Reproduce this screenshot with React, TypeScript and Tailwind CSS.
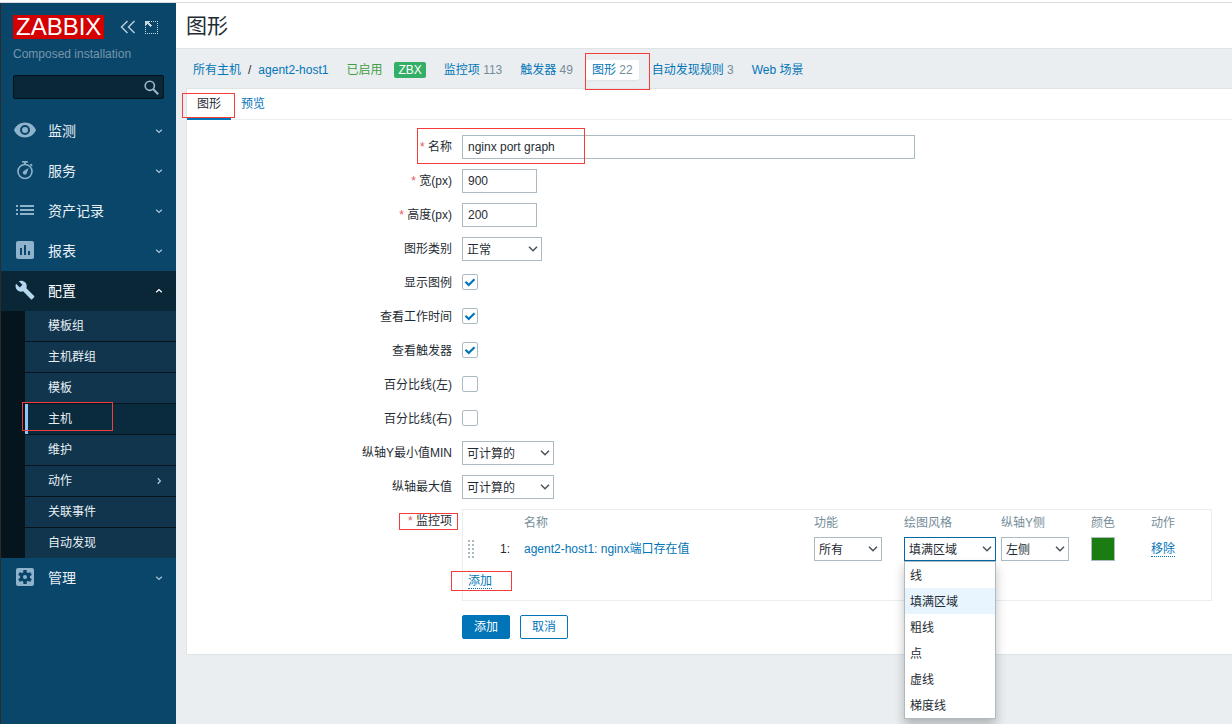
import { useState, type ReactNode } from "react";

const iconProps = { width: 24, height: 24, viewBox: "0 0 24 24", fill: "currentColor", "aria-hidden": true };

const EyeIcon = () => (
  <svg {...iconProps}>
    <path
      fillRule="evenodd"
      d="M12 4.5C7 4.5 2.7 7.6 1 12c1.7 4.4 6 7.5 11 7.5s9.3-3.1 11-7.5c-1.7-4.4-6-7.5-11-7.5zm0 12.5a5 5 0 1 1 0-10 5 5 0 0 1 0 10zm0-8a3 3 0 1 0 0 6 3 3 0 0 0 0-6z"
    />
  </svg>
);

const StopwatchIcon = () => (
  <svg {...iconProps}>
    <path d="M9.2 3h5.6v1.8H9.2zM11.1 4h1.8v3h-1.8zM18 5.6l1.7 1.7-1.2 1.2-1.7-1.7z" />
    <circle cx="12" cy="13.5" r="7" fill="none" stroke="currentColor" strokeWidth="1.6" />
    <path d="M15.6 10 13.8 15a2 2 0 1 1-3.1-2z" />
  </svg>
);

const ListIcon = () => (
  <svg {...iconProps}>
    <path d="M3 7h2v2H3zM7 7h14v2H7zM3 11h2v2H3zM7 11h14v2H7zM3 15h2v2H3zM7 15h14v2H7z" />
  </svg>
);

const ReportIcon = () => (
  <svg {...iconProps}>
    <path
      fillRule="evenodd"
      d="M5 3h14a2 2 0 0 1 2 2v14a2 2 0 0 1-2 2H5a2 2 0 0 1-2-2V5a2 2 0 0 1 2-2zm2 7v7h2v-7H7zm4-3v10h2V7h-2zm4 6v4h2v-4h-2z"
    />
  </svg>
);

const WrenchIcon = () => (
  <svg {...iconProps} viewBox="-2 -2 28 28">
    <path d="M22.700 19l-9.100-9.100c.9-2.300.4-5-1.500-6.900-2-2-5-2.400-7.400-1.300L9 6 6 9 1.600 4.700C.4 7.100.9 10.100 2.900 12.100c1.900 1.900 4.600 2.400 6.900 1.500l9.100 9.100c.4.4 1 .4 1.400 0l2.300-2.300c.5-.4.5-1.100.1-1.400z" />
  </svg>
);

const GearIcon = () => (
  <svg {...iconProps}>
    <rect x="3" y="3" width="18" height="18" rx="2" />
    <g fill="#0a466a">
      <circle cx="12" cy="12" r="5" />
      <rect x="10.300" y="5" width="3.400" height="14" rx=".6" />
      <rect x="10.300" y="5" width="3.400" height="14" rx=".6" transform="rotate(60 12 12)" />
      <rect x="10.300" y="5" width="3.400" height="14" rx=".6" transform="rotate(120 12 12)" />
    </g>
    <circle cx="12" cy="12" r="2" />
  </svg>
);

const SmallChevron = ({ className = "" }: { className?: string }) => (
  <svg width="8" height="8" viewBox="0 0 8 8" className={className} aria-hidden="true">
    <path d="M1.200 2.800 4 5.400 6.800 2.800" fill="none" stroke="currentColor" strokeWidth="1.300" />
  </svg>
);

const menuTop = [
  { label: "监测", icon: <EyeIcon /> },
  { label: "服务", icon: <StopwatchIcon /> },
  { label: "资产记录", icon: <ListIcon /> },
  { label: "报表", icon: <ReportIcon /> },
];

const subMenu = ["模板组", "主机群组", "模板", "主机", "维护", "动作", "关联事件", "自动发现"];

const drawStyles = ["线", "填满区域", "粗线", "点", "虚线", "梯度线"];

// Red frame drawn over the element it points at
const Mark = ({ className }: { className: string }) => (
  <span className={`pointer-events-none absolute z-10 border border-[#f53b3b] ${className}`} />
);

function MenuItem({ label, icon, open = false }: { label: string; icon: ReactNode; open?: boolean }) {
  return (
    <a
      href="#"
      className={`flex h-10 items-center pl-3 pr-[13px] text-sm ${
        open ? "bg-[#0a2737] text-white" : "text-[#e8f0f5]"
      }`}
    >
      <span className={`mb-[2px] mr-[11px] ${open ? "text-[#b4d7ee]" : "text-[#8fb3cb]"}`}>{icon}</span>
      <span className="grow">{label}</span>
      <SmallChevron className={open ? "rotate-180" : "text-[#a9c4d5]"} />
    </a>
  );
}

function Sidebar() {
  return (
    <aside className="w-[175px] shrink-0 bg-[#0a466a]">
      <div className="px-3 pt-3">
        <div className="flex items-center">
          <div className="flex h-6 items-center bg-[#d40000] px-[3px] text-2xl text-white">ZABBIX</div>
          <button aria-label="收起侧边栏" className="ml-4 text-[#b4ccda]">
            <svg width="16" height="14" viewBox="0 0 16 14" fill="none" stroke="currentColor" strokeWidth="1.500">
              <path d="M7.500 1 1.500 7l6 6M14.500 1l-6 6 6 6" />
            </svg>
          </button>
          <button aria-label="隐藏侧边栏" className="ml-[9px] text-[#c4d8e4]">
            <svg width="13" height="13" viewBox="0 0 13 13" fill="currentColor" shapeRendering="crispEdges">
              <path
                d="M6 .5h7M12.500 2v11M0 12.500h12M.5 6v7"
                fill="none"
                stroke="currentColor"
                strokeDasharray="1 1"
              />
              <path d="M0 0h5v1H4v1h1v1h1v1h1v1H6v1H5V5H4V4H3V3H2v1H1v1H0z" />
            </svg>
          </button>
        </div>
        <div className="mt-[7px] text-[#7496ac]">Composed installation</div>
        <div className="mt-[13px] flex h-6 items-center rounded-xs border border-[#04121b] bg-[#0a2737]">
          <input aria-label="搜索" className="w-full min-w-0 grow px-1 text-white outline-none" />
          <button aria-label="搜索" className="mr-1 text-[#9db8c9]">
            <svg width="15" height="15" viewBox="0 0 15 15" fill="none" stroke="currentColor">
              <circle cx="5.800" cy="5.800" r="4.600" strokeWidth="1.600" />
              <path d="m9.300 9.300 4.900 4.900" strokeWidth="2" />
            </svg>
          </button>
        </div>
      </div>
      <nav className="mt-3">
        {menuTop.map((item) => (
          <MenuItem key={item.label} {...item} />
        ))}
        <MenuItem label="配置" icon={<WrenchIcon />} open />
        <div className="bg-[#05141d] pl-6">
          {subMenu.map((label) => (
            <a
              key={label}
              href="#"
              className={`relative flex h-[31px] items-center border-b border-[#05141d] pl-[23px] pr-[13px] text-[#e8f0f5] last:h-[30px] last:border-b-0 ${
                label === "主机" ? "bg-[#0a2a3d] shadow-[inset_3px_0_0_#8cc8f5]" : "bg-[#11354d]"
              }`}
            >
              <span className="grow">{label}</span>
              {label === "动作" && <SmallChevron className="-rotate-90 text-[#a9c4d5]" />}
              {label === "主机" && <Mark className="-left-[3px] -top-[2px] h-[29px] w-[91px]" />}
            </a>
          ))}
        </div>
        <MenuItem label="管理" icon={<GearIcon />} />
      </nav>
    </aside>
  );
}

function Breadcrumbs() {
  const link = "text-[#0275b8]";
  return (
    <nav className="flex flex-wrap items-center gap-x-[18px] pb-2 pl-[7px] pt-[11px]">
      <span className="flex gap-[7px]">
        <a href="#" className={link}>所有主机</a>
        <span>/</span>
        <a href="#" className={link}>agent2-host1</a>
      </span>
      <span className="flex items-center gap-3 text-[#429e47]">
        已启用
        <span className="h-4 rounded-xs bg-[#34af67] px-1 leading-4 text-white">ZBX</span>
      </span>
      <a href="#" className={link}>监控项 <span className="text-[#768d99]">113</span></a>
      <a href="#" className={link}>触发器 <span className="text-[#768d99]">49</span></a>
      <span className="relative -mx-[5px]">
        <a href="#" className={`block rounded-xs bg-white px-[6px] py-[2px] shadow-xs ${link}`}>
          图形 <span className="text-[#768d99]">22</span>
        </a>
        <Mark className="-left-px -top-[7px] h-[37px] w-[65px]" />
      </span>
      <a href="#" className={link}>自动发现规则 <span className="text-[#768d99]">3</span></a>
      <a href="#" className={link}>Web 场景</a>
    </nav>
  );
}

type SelectProps = { id?: string; label?: string; width: string; options: string[]; value?: string; open?: boolean };

function Select({ id, label, width, options, value, open = false }: SelectProps) {
  return (
    <span className={`relative block ${width}`}>
      <select
        id={id}
        aria-label={label}
        defaultValue={value ?? options[0]}
        className={`block h-6 w-full appearance-none border bg-white pl-1 pr-5 pt-px outline-none ${
          open ? "border-[#0568a6]" : "border-[#acbbc2]"
        }`}
      >
        {options.map((o) => (
          <option key={o}>{o}</option>
        ))}
      </select>
      <svg
        width="10"
        height="6"
        viewBox="0 0 10 6"
        className="pointer-events-none absolute right-1 top-[9px]"
        aria-hidden="true"
      >
        <path d="M1 .8 5 4.800 9 .8" fill="none" stroke="#47545c" strokeWidth="1.500" />
      </svg>
      {open && (
        <ul
          role="listbox"
          aria-label={label}
          className="absolute inset-x-0 top-6 z-20 border border-[#acbbc2] bg-white shadow-[0_6px_10px_rgba(0,0,0,0.25)]"
        >
          {options.map((o) => (
            <li
              key={o}
              role="option"
              aria-selected={o === value}
              className={`h-[26px] px-[5px] pt-px leading-[26px] ${o === value ? "bg-[#e8f5ff]" : ""}`}
            >
              {o}
            </li>
          ))}
        </ul>
      )}
    </span>
  );
}

function Checkbox({ id, initial }: { id: string; initial: boolean }) {
  const [on, setOn] = useState(initial);
  return (
    <span className="relative flex h-[22px] items-center">
      <input
        id={id}
        type="checkbox"
        checked={on}
        onChange={() => setOn(!on)}
        className="size-4 appearance-none rounded-xs border border-[#acbbc2] bg-white"
      />
      {on && (
        <svg width="16" height="16" viewBox="0 0 16 16" className="pointer-events-none absolute left-0" aria-hidden="true">
          <path d="m3.500 7.800 3.200 3.200 5.800-5.800" fill="none" stroke="#0275b8" strokeWidth="2.200" />
        </svg>
      )}
    </span>
  );
}

type RowProps = { id?: string; label: string; required?: boolean; mark?: string; children: ReactNode };

function Row({ id, label, required, mark, children }: RowProps) {
  return (
    <div className="flex items-start gap-[10px]">
      <div className="w-[265px] shrink-0 text-right leading-6">
        <span className="relative inline-block">
          <label htmlFor={id}>
            {required && <span className="text-[#e45959]">* </span>}
            {label}
          </label>
          {mark && <Mark className={mark} />}
        </span>
      </div>
      {children}
    </div>
  );
}

const inputClass = "h-6 min-w-0 border border-[#acbbc2] bg-white px-[5px] outline-none";
const dottedLink = "border-b border-dotted border-[#0275b8] text-[#0275b8]";

function ItemsTable() {
  return (
    <div className="w-[750px] border border-[#ebeef0] pb-2">
      <table className="w-full table-fixed text-left">
        <colgroup>
          <col className="w-8" />
          <col className="w-6" />
          <col className="w-[290px]" />
          <col className="w-[90px]" />
          <col className="w-[97px]" />
          <col className="w-[90px]" />
          <col className="w-[60px]" />
          <col />
        </colgroup>
        <thead>
          <tr className="h-6 text-[#768d99] [&>th]:px-[5px] [&>th]:pt-[2px] [&>th]:font-normal">
            <th />
            <th />
            <th>名称</th>
            <th>功能</th>
            <th>绘图风格</th>
            <th>纵轴Y侧</th>
            <th>颜色</th>
            <th>动作</th>
          </tr>
        </thead>
        <tbody>
          <tr className="h-[30px] [&>td]:px-[5px]">
            <td>
              <svg width="7" height="18" viewBox="0 0 7 18" fill="#acbbc2" aria-hidden="true">
                {[0, 4, 8, 12, 16].map((y) => (
                  <path key={y} d={`M0 ${y}h2v2H0zM4 ${y}h2v2H4z`} />
                ))}
              </svg>
            </td>
            <td>1:</td>
            <td>
              <a href="#" className="text-[#0275b8]">agent2-host1: nginx端口存在值</a>
            </td>
            <td>
              <Select label="功能" width="w-[68px]" options={["所有", "最小", "平均", "最大"]} />
            </td>
            <td>
              <Select label="绘图风格" width="w-[92px]" options={drawStyles} value="填满区域" open />
            </td>
            <td>
              <Select label="纵轴Y侧" width="w-[68px]" options={["左侧", "右侧"]} />
            </td>
            <td>
              <button aria-label="颜色" className="block size-6 border border-[#acbbc2] bg-[#1a7c11]" />
            </td>
            <td>
              <button className={`leading-[14px] ${dottedLink}`}>移除</button>
            </td>
          </tr>
          <tr className="h-7">
            <td colSpan={8} className="px-[5px] pt-[6px]">
              <span className="relative inline-block">
                <button className={`block leading-[14px] ${dottedLink}`}>添加</button>
                <Mark className="-left-[17px] -top-[3px] h-5 w-[61px]" />
              </span>
            </td>
          </tr>
        </tbody>
      </table>
    </div>
  );
}

function GraphForm() {
  return (
    <form className="flex flex-col gap-[10px] py-[15px]" onSubmit={(e) => e.preventDefault()}>
      <Row id="name" label="名称" required mark="-left-[3px] -top-[7px] h-9 w-[168px]">
        <input id="name" defaultValue="nginx port graph" className={`w-[453px] ${inputClass}`} />
      </Row>
      <Row id="width" label="宽(px)" required>
        <input id="width" defaultValue="900" className={`w-[75px] ${inputClass}`} />
      </Row>
      <Row id="height" label="高度(px)" required>
        <input id="height" defaultValue="200" className={`w-[75px] ${inputClass}`} />
      </Row>
      <Row id="type" label="图形类别">
        <Select id="type" width="w-20" options={["正常", "层积的", "饼图", "分解饼图"]} />
      </Row>
      <Row id="legend" label="显示图例">
        <Checkbox id="legend" initial />
      </Row>
      <Row id="worktime" label="查看工作时间">
        <Checkbox id="worktime" initial />
      </Row>
      <Row id="triggers" label="查看触发器">
        <Checkbox id="triggers" initial />
      </Row>
      <Row id="left" label="百分比线(左)">
        <Checkbox id="left" initial={false} />
      </Row>
      <Row id="right" label="百分比线(右)">
        <Checkbox id="right" initial={false} />
      </Row>
      <Row id="ymin" label="纵轴Y最小值MIN">
        <Select id="ymin" width="w-[92px]" options={["可计算的", "固定的", "监控项"]} />
      </Row>
      <Row id="ymax" label="纵轴最大值">
        <Select id="ymax" width="w-[92px]" options={["可计算的", "固定的", "监控项"]} />
      </Row>
      <Row label="监控项" required mark="-left-[9px] top-1 h-[17px] w-[59px]">
        <ItemsTable />
      </Row>
      <div className="mt-1 flex gap-[10px] pl-[275px]">
        <button type="submit" className="h-6 rounded-xs border border-[#0275b8] bg-[#0275b8] px-[11px] text-white">
          添加
        </button>
        <button type="button" className="h-6 rounded-xs border border-[#0275b8] bg-white px-[11px] text-[#0275b8]">
          取消
        </button>
      </div>
    </form>
  );
}

export default function App() {
  return (
    <div className="flex min-h-screen flex-col font-['Liberation_Sans','Noto_Sans_CJK_SC',sans-serif] text-xs text-[#1f2c33]">
      <div className="h-[3px] border-b border-[#d9dcde] bg-white" />
      <div className="flex grow border-l border-[#2b2b2b]">
        <Sidebar />
        <main className="min-w-0 grow overflow-x-clip bg-[#ebeef0]">
          <header className="border-b border-[#dfe4e7] bg-white px-[10px]">
            <h1 className="text-[21px] leading-[45px]">图形</h1>
          </header>
          <div className="pl-[10px]">
            <Breadcrumbs />
            <section className="border-y border-l border-[#dfe4e7] bg-white">
              <div className="flex h-[31px] border-b border-[#ebeef0]">
                <span className="relative">
                  <button className="h-[31px] border-b-[3px] border-[#0275b8] px-[10px] pt-[2px]">图形</button>
                  <Mark className="-left-[5px] top-1 h-[25px] w-[53px]" />
                </span>
                <button className="h-[31px] border-b-[3px] border-transparent px-[10px] pt-[2px] text-[#0275b8]">
                  预览
                </button>
              </div>
              <GraphForm />
            </section>
          </div>
        </main>
      </div>
    </div>
  );
}
